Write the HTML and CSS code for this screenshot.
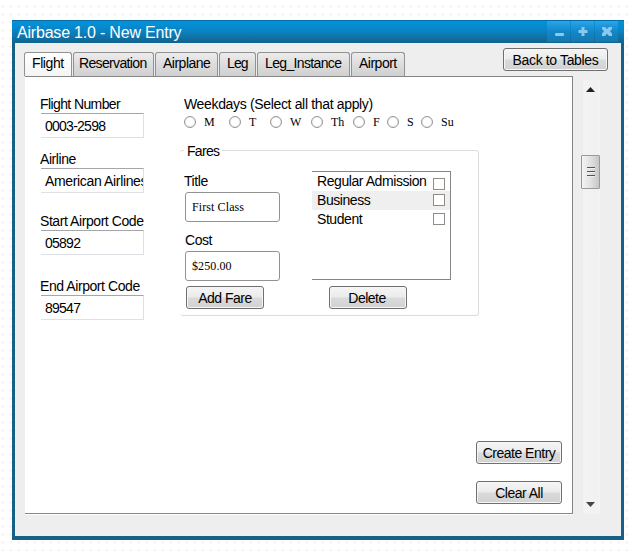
FILE: index.html
```html
<!DOCTYPE html>
<html lang="en">
<head>
<meta charset="utf-8">
<title>Airbase 1.0 - New Entry</title>
<link rel="stylesheet" href="styles.css">
</head>
<body>
<main class="window">
  <header class="titlebar">
    <h1>Airbase 1.0 - New Entry</h1>
    <div class="controls">
      <span class="control"><svg width="23" height="21" viewBox="0 0 23 21"><rect x="8" y="12" width="9" height="3" rx="1"/></svg></span>
      <span class="control"><svg width="23" height="21" viewBox="0 0 23 21"><path d="M10.500 6h3v3h3v3h-3v3h-3v-3h-3V9h3z"/></svg></span>
      <span class="control"><svg width="23" height="21" viewBox="0 0 23 21"><path d="M7 6h3l2 2 2-2h3v2l-2 2.300 2 2.300V15h-3l-2-2.300L10 15H7v-2.400l2-2.300L7 8z"/></svg></span>
    </div>
  </header>
  <div class="toolbar">
    <nav class="tabs">
      <span class="tab tab-flight active">Flight</span>
      <span class="tab tab-reservation">Reservation</span>
      <span class="tab tab-airplane">Airplane</span>
      <span class="tab tab-leg">Leg</span>
      <span class="tab tab-instance">Leg_Instance</span>
      <span class="tab tab-airport">Airport</span>
    </nav>
    <button class="btn back">Back to Tables</button>
  </div>
  <div class="body">
    <section class="panel">
      <div class="form">
        <div class="fields">
          <div class="field"><div class="label number">Flight Number</div><div class="input">0003-2598</div></div>
          <div class="field"><div class="label">Airline</div><div class="input name">American Airlines</div></div>
          <div class="field start"><div class="label">Start Airport Code</div><div class="input">05892</div></div>
          <div class="field end"><div class="label">End Airport Code</div><div class="input">89547</div></div>
        </div>
        <div class="details">
          <div class="label weekdays">Weekdays (Select all that apply)</div>
          <div class="days">
            <span class="day"><i class="radio"></i>M</span>
            <span class="day"><i class="radio"></i>T</span>
            <span class="day"><i class="radio"></i>W</span>
            <span class="day"><i class="radio"></i>Th</span>
            <span class="day"><i class="radio"></i>F</span>
            <span class="day"><i class="radio"></i>S</span>
            <span class="day"><i class="radio"></i>Su</span>
          </div>
          <div class="fares">
            <div class="legend">Fares</div>
            <div class="fare-form">
              <div class="label">Title</div>
              <div class="round-input">First Class</div>
              <div class="label cost">Cost</div>
              <div class="round-input">$250.00</div>
              <button class="btn add">Add Fare</button>
            </div>
            <div class="fare-list">
              <div class="list">
                <div class="row first"><span>Regular Admission</span><i class="check"></i></div>
                <div class="row shaded"><span>Business</span><i class="check"></i></div>
                <div class="row"><span>Student</span><i class="check"></i></div>
              </div>
              <button class="btn delete">Delete</button>
            </div>
          </div>
        </div>
      </div>
      <div class="actions">
        <button class="btn wide create">Create Entry</button>
        <button class="btn wide clear">Clear All</button>
      </div>
    </section>
    <div class="scrollbar">
      <svg class="arrow" width="9" height="5" viewBox="0 0 9 5"><path d="M0 5 4.500 0 9 5z"/></svg>
      <div class="thumb"><i></i><i></i><i></i></div>
      <svg class="arrow down" width="9" height="5" viewBox="0 0 9 5"><path d="M0 0h9L4.500 5z"/></svg>
    </div>
  </div>
</main>
</body>
</html>
```
FILE: styles.css
```css
* { box-sizing: border-box; }
body {
  margin: 0;
  padding: 20px 0 0 12px;
  height: 551px;
  overflow: hidden;
  background: radial-gradient(circle at 2.5px 6.5px, #f3efec 0.8px, #fff 1.5px) 0 0 / 8px 8px;
  font: 14px/17px "Liberation Sans", Arial, sans-serif;
  letter-spacing: -0.43px;
  color: #000;
  white-space: nowrap;
}
.window {
  width: 612px;
  height: 520px;
  background: #eeeeee;
  border: solid #176087;
  border-width: 0 3px 4px;
}
.titlebar {
  display: flex;
  justify-content: space-between;
  height: 23px;
  margin: 0 -3px;
  background: linear-gradient(#0093dc, #0a83c3 45%, #12638f);
  border-top: 1px solid #086ba5;
}
h1 {
  margin: 0;
  padding-left: 5px;
  font-size: 16px;
  line-height: 23px;
  font-weight: normal;
  letter-spacing: -0.2px;
  color: #fff;
}
.controls { display: flex; gap: 1px; padding-right: 6px; }
.control { width: 23px; height: 21px; background: linear-gradient(#27a5ea, #1387c8 50%, #1578ae); }
.control svg { display: block; fill: #88c9ed; }
.toolbar { display: flex; justify-content: space-between; height: 33px; padding: 5px 13px 0 9px; }
.tabs { display: flex; gap: 1px; padding-top: 4px; }
.tab {
  height: 24px;
  padding-left: 6px;
  border: 1px solid #929292;
  border-bottom: 0;
  border-radius: 3px 3px 0 0;
  background: linear-gradient(#ececec, #dedede 45%, #d0d0d0);
  line-height: 21px;
  letter-spacing: -0.65px;
}
.tab.active { background: linear-gradient(#fff, #f4f4f4); }
.tab-flight { width: 48px; padding-left: 7px; letter-spacing: -0.4px; }
.tab-reservation { width: 81px; padding-left: 5px; }
.tab-airplane { width: 63px; padding-left: 7px; letter-spacing: -0.5px; }
.tab-leg { width: 37px; padding-left: 7px; letter-spacing: -0.9px; }
.tab-instance { width: 93px; padding-left: 7px; }
.tab-airport { width: 54px; padding-left: 7px; letter-spacing: -0.5px; }
.btn {
  display: block;
  height: 23px;
  padding: 1px 0 0;
  border: 1px solid #6f6f6f;
  border-radius: 3px;
  background: linear-gradient(#f5f5f5, #ebebeb 48%, #dadada 52%, #d2d2d2);
  box-shadow: inset 0 0 0 1px #f6f6f6;
  font: 14px/20px "Liberation Sans", Arial, sans-serif;
  letter-spacing: -0.5px;
  color: #000;
}
.back { width: 105px; letter-spacing: -0.36px; }
.body { display: flex; padding-left: 10px; }
.panel {
  width: 548px;
  height: 438px;
  background: #fff;
  border: solid #858585;
  border-width: 1px 1px 1px 0;
  box-shadow: 0 1px #fff;
}
.form { display: flex; height: 364px; padding: 19px 0 0 15px; }
.fields { width: 140px; }
.field { margin-bottom: 13px; }
.start { padding-top: 7px; }
.end { padding-top: 10px; }
.label { height: 17px; line-height: 17px; }
.number { letter-spacing: -0.6px; }
.input {
  width: 103px;
  height: 25px;
  margin: 1px 0 0 1px;
  padding-left: 4px;
  border: solid #dde1e6;
  border-width: 1px 1px 1px 0;
  border-top-color: #a4a7aa;
  line-height: 25px;
  letter-spacing: -0.75px;
  overflow: hidden;
}
.input.name { letter-spacing: -0.35px; }
.field .label { height: 16px; }
.details { width: 299px; }
.weekdays { padding-left: 4px; letter-spacing: -0.34px; }
.days { display: grid; grid-template-columns: 45px 41px 41px 42px 34px 34px 50px; padding-left: 4px; height: 18px; }
.day { display: flex; align-items: center; gap: 8px; font: 12px/18px "Liberation Serif", serif; letter-spacing: 0; }
.radio { width: 12px; height: 12px; border: 1px solid #969696; border-radius: 50%; box-shadow: inset 0 0 1px #aaa; }
.fares {
  display: flex;
  position: relative;
  width: 299px;
  height: 166px;
  margin-top: 19px;
  border: 1px solid #dadde0;
  border-left: 0;
  border-radius: 3px;
}
.legend { position: absolute; left: 4px; top: -8px; padding: 0 3px; background: #fff; letter-spacing: -0.7px; }
.fare-form { width: 132px; padding: 22px 0 0 4px; }
.fare-form .label { height: 19px; }
.round-input {
  width: 95px;
  height: 30px;
  margin-left: 1px;
  padding-left: 6px;
  border: 1px solid #929292;
  border-radius: 3px;
  font: 12px/29px "Liberation Serif", serif;
  letter-spacing: 0.1px;
}
.fare-form .cost { height: 29px; padding: 10px 0 0 1px; }
.add { width: 78px; margin: 5px 0 0 2px; }
.list {
  width: 139px;
  height: 109px;
  margin-top: 20px;
  border: solid #858585;
  border-width: 1px 1px 1px 0;
}
.row { display: flex; justify-content: space-between; align-items: center; height: 19px; padding: 0 5px; }
.shaded { background: #efefef; }
.check { flex: none; width: 12px; height: 12px; margin-top: -1px; border: 1px solid #918d86; background: #fff; }
.first .check { margin-top: 5px; }
.delete { width: 78px; margin: 6px 0 0 17px; padding-right: 2px; }
.actions { display: flex; flex-direction: column; align-items: flex-end; gap: 17px; padding-right: 10px; }
.wide { width: 86px; }
.scrollbar {
  width: 19px;
  height: 434px;
  margin: 4px 0 0 8px;
  background: linear-gradient(90deg, #e9e9e9, #f3f3f3 15%, #f1f1f1 85%, #f5f5f5);
}
.arrow { display: block; margin: 7px 0 0 5px; fill: #222; }
.thumb {
  display: flex;
  flex-direction: column;
  align-items: center;
  gap: 3px;
  height: 34px;
  margin-top: 63px;
  padding-top: 11px;
  border: 1px solid #999;
  border-radius: 1px;
  background: linear-gradient(90deg, #f4f4f4, #e1e1e1 50%, #c6c6c6);
}
.thumb i { width: 8px; height: 1px; background: #555; box-shadow: 0 1px #eee; }
.arrow.down { margin-top: 313px; fill: #444; }
```
